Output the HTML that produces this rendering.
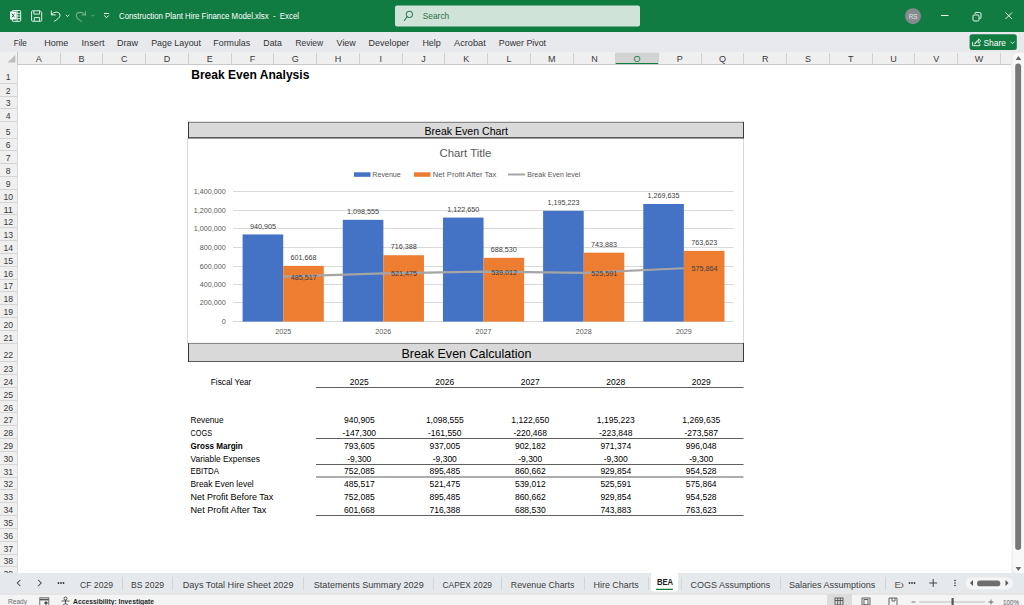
<!DOCTYPE html>
<html><head><meta charset="utf-8"><style>
html,body{margin:0;padding:0;background:#fff;overflow:hidden;}
svg{display:block;font-family:"Liberation Sans", sans-serif;}
</style></head><body>
<svg width="1024" height="605" viewBox="0 0 1024 605">
<rect width="1024" height="605" fill="#fff"/>
<rect x="0" y="0" width="1024" height="32" fill="#107c41" />
<g><rect x="12.3" y="10.5" width="8.4" height="10.8" rx="0.8" fill="none" stroke="#fff" stroke-width="0.9"/><line x1="16.5" y1="13.4" x2="20.7" y2="13.4" stroke="#fff" stroke-width="0.8"/><line x1="16.5" y1="16" x2="20.7" y2="16" stroke="#fff" stroke-width="0.8"/><line x1="16.5" y1="18.6" x2="20.7" y2="18.6" stroke="#fff" stroke-width="0.8"/><line x1="17.1" y1="10.5" x2="17.1" y2="21.3" stroke="#fff" stroke-width="0.8"/><rect x="10" y="11.6" width="6.5" height="7.8" rx="0.6" fill="#fff"/><path d="M11.9 13.6 L14.6 17.4 M14.6 13.6 L11.9 17.4" stroke="#107c41" stroke-width="1"/></g>
<g fill="none" stroke="#fff" stroke-width="0.85"><path d="M32.6 10.8 h7.6 l1.5 1.5 v8 a1 1 0 0 1 -1 1 h-8.1 a1 1 0 0 1 -1 -1 v-8.5 a1 1 0 0 1 1 -1 z"/><path d="M33.9 10.8 v3.3 h5.7 v-3.3"/><path d="M34.3 21.3 v-3.7 h5.3 v3.7"/></g>
<g fill="none" stroke="#fff" stroke-width="0.9" stroke-linecap="round"><path d="M51.3 10.9 v4 h4"/><path d="M51.5 14.7 C53.5 11.3 59.8 11 60 15.2 C60.1 17.5 57 19.5 54.2 21.4"/><path d="M66 15 l1.5 1.5 l1.5 -1.5" stroke-width="0.85"/></g>
<g fill="none" stroke="#6fb18c" stroke-width="1.1" stroke-linecap="round"><path d="M85.5 11.5 v3.5 h-3.5"/><path d="M85.2 14.8 C83 11.5 76.5 11.5 76.3 15.5 C76.2 18 79 19.5 81.5 21.5"/><path d="M91.5 15 l1.3 1.3 l1.3 -1.3" stroke-width="0.8"/></g>
<g fill="none" stroke="#fff" stroke-width="1"><line x1="104" y1="13.5" x2="109" y2="13.5"/><path d="M104.3 15.5 l2.2 2.2 l2.2 -2.2"/></g>
<text x="119" y="18.8" font-size="8.3" fill="#fff" text-anchor="start" textLength="180" lengthAdjust="spacingAndGlyphs" xml:space="preserve">Construction Plant Hire Finance Model.xlsx  -  Excel</text>
<rect x="395" y="5.5" width="245" height="21" rx="2" fill="#cfe4d6"/>
<g fill="none" stroke="#3d7a55" stroke-width="1.05" stroke-linecap="round"><circle cx="409.4" cy="14.3" r="3.1"/><line x1="407.2" y1="16.6" x2="404.3" y2="20.5"/></g>
<text x="422.8" y="18.7" font-size="9.2" fill="#2f6e4a" text-anchor="start" textLength="26.4" lengthAdjust="spacingAndGlyphs" >Search</text>
<circle cx="913" cy="16.2" r="8" fill="#858b8e"/>
<text x="913" y="18.8" font-size="6.3" fill="#e6e6e6" text-anchor="middle" >RS</text>
<line x1="941" y1="15.5" x2="948.5" y2="15.5" stroke="#fff" stroke-width="0.9"/>
<g fill="none" stroke="#fff" stroke-width="0.9"><rect x="973" y="15" width="6" height="6" rx="1.2"/><path d="M975 14 v-0.5 a1 1 0 0 1 1 -1 h3.5 a1.5 1.5 0 0 1 1.5 1.5 v3.5 a1 1 0 0 1 -1 1 h-0.5"/></g>
<path d="M1005.5 12.5 L1012 19 M1012 12.5 L1005.5 19" stroke="#fff" stroke-width="0.9"/>
<rect x="0" y="32" width="1024" height="20" fill="#e7e9ed" />
<text x="13.7" y="45.8" font-size="9.4" fill="#333" text-anchor="start" textLength="13.1" lengthAdjust="spacingAndGlyphs" >File</text>
<text x="44.3" y="45.8" font-size="9.4" fill="#333" text-anchor="start" textLength="24.1" lengthAdjust="spacingAndGlyphs" >Home</text>
<text x="81.5" y="45.8" font-size="9.4" fill="#333" text-anchor="start" textLength="23.0" lengthAdjust="spacingAndGlyphs" >Insert</text>
<text x="117" y="45.8" font-size="9.4" fill="#333" text-anchor="start" textLength="21" lengthAdjust="spacingAndGlyphs" >Draw</text>
<text x="151.2" y="45.8" font-size="9.4" fill="#333" text-anchor="start" textLength="49.8" lengthAdjust="spacingAndGlyphs" >Page Layout</text>
<text x="213.3" y="45.8" font-size="9.4" fill="#333" text-anchor="start" textLength="36.9" lengthAdjust="spacingAndGlyphs" >Formulas</text>
<text x="263.3" y="45.8" font-size="9.4" fill="#333" text-anchor="start" textLength="18.6" lengthAdjust="spacingAndGlyphs" >Data</text>
<text x="295.5" y="45.8" font-size="9.4" fill="#333" text-anchor="start" textLength="27.5" lengthAdjust="spacingAndGlyphs" >Review</text>
<text x="336.6" y="45.8" font-size="9.4" fill="#333" text-anchor="start" textLength="19.2" lengthAdjust="spacingAndGlyphs" >View</text>
<text x="368.6" y="45.8" font-size="9.4" fill="#333" text-anchor="start" textLength="40.7" lengthAdjust="spacingAndGlyphs" >Developer</text>
<text x="422.4" y="45.8" font-size="9.4" fill="#333" text-anchor="start" textLength="18.4" lengthAdjust="spacingAndGlyphs" >Help</text>
<text x="454" y="45.8" font-size="9.4" fill="#333" text-anchor="start" textLength="31.8" lengthAdjust="spacingAndGlyphs" >Acrobat</text>
<text x="498.8" y="45.8" font-size="9.4" fill="#333" text-anchor="start" textLength="47.3" lengthAdjust="spacingAndGlyphs" >Power Pivot</text>
<rect x="969.6" y="34.2" width="47.2" height="15.8" rx="2.5" fill="#107c41"/>
<g fill="none" stroke="#fff" stroke-width="0.85" stroke-linejoin="round"><path d="M972.6 41.8 v3.9 h7.2 v-2"/><path d="M974.8 44.2 c0.4 -2.4 1.8 -3.6 3.8 -3.6 v-1.7 l2.2 2.1 l-2.2 2.1 v-1.3 c-1.6 0 -2.8 0.8 -3.8 2.4z"/></g>
<text x="983.5" y="45.8" font-size="9.6" fill="#fff" text-anchor="start" textLength="22.5" lengthAdjust="spacingAndGlyphs" >Share</text>
<path d="M1010.4 41.6 l2 2 l2 -2" fill="none" stroke="#fff" stroke-width="0.8"/>
<rect x="0" y="52" width="1024" height="13" fill="#efefef" />
<path d="M7.5 62.6 L15.3 62.6 L15.3 55 Z" fill="#bdbdbd"/>
<line x1="60.50" y1="53" x2="60.50" y2="64" stroke="#d0d0d0" stroke-width="1"/>
<text x="38.77" y="61.9" font-size="9.0" fill="#3a3a3a" text-anchor="middle" >A</text>
<line x1="102.50" y1="53" x2="102.50" y2="64" stroke="#d0d0d0" stroke-width="1"/>
<text x="81.51" y="61.9" font-size="9.0" fill="#3a3a3a" text-anchor="middle" >B</text>
<line x1="145.50" y1="53" x2="145.50" y2="64" stroke="#d0d0d0" stroke-width="1"/>
<text x="124.25" y="61.9" font-size="9.0" fill="#3a3a3a" text-anchor="middle" >C</text>
<line x1="188.50" y1="53" x2="188.50" y2="64" stroke="#d0d0d0" stroke-width="1"/>
<text x="166.99" y="61.9" font-size="9.0" fill="#3a3a3a" text-anchor="middle" >D</text>
<line x1="231.50" y1="53" x2="231.50" y2="64" stroke="#d0d0d0" stroke-width="1"/>
<text x="209.73" y="61.9" font-size="9.0" fill="#3a3a3a" text-anchor="middle" >E</text>
<line x1="273.50" y1="53" x2="273.50" y2="64" stroke="#d0d0d0" stroke-width="1"/>
<text x="252.47" y="61.9" font-size="9.0" fill="#3a3a3a" text-anchor="middle" >F</text>
<line x1="316.50" y1="53" x2="316.50" y2="64" stroke="#d0d0d0" stroke-width="1"/>
<text x="295.21" y="61.9" font-size="9.0" fill="#3a3a3a" text-anchor="middle" >G</text>
<line x1="359.50" y1="53" x2="359.50" y2="64" stroke="#d0d0d0" stroke-width="1"/>
<text x="337.95" y="61.9" font-size="9.0" fill="#3a3a3a" text-anchor="middle" >H</text>
<line x1="402.50" y1="53" x2="402.50" y2="64" stroke="#d0d0d0" stroke-width="1"/>
<text x="380.69" y="61.9" font-size="9.0" fill="#3a3a3a" text-anchor="middle" >I</text>
<line x1="444.50" y1="53" x2="444.50" y2="64" stroke="#d0d0d0" stroke-width="1"/>
<text x="423.43" y="61.9" font-size="9.0" fill="#3a3a3a" text-anchor="middle" >J</text>
<line x1="487.50" y1="53" x2="487.50" y2="64" stroke="#d0d0d0" stroke-width="1"/>
<text x="466.17" y="61.9" font-size="9.0" fill="#3a3a3a" text-anchor="middle" >K</text>
<line x1="530.50" y1="53" x2="530.50" y2="64" stroke="#d0d0d0" stroke-width="1"/>
<text x="508.91" y="61.9" font-size="9.0" fill="#3a3a3a" text-anchor="middle" >L</text>
<line x1="573.50" y1="53" x2="573.50" y2="64" stroke="#d0d0d0" stroke-width="1"/>
<text x="551.65" y="61.9" font-size="9.0" fill="#3a3a3a" text-anchor="middle" >M</text>
<line x1="615.50" y1="53" x2="615.50" y2="64" stroke="#d0d0d0" stroke-width="1"/>
<text x="594.39" y="61.9" font-size="9.0" fill="#3a3a3a" text-anchor="middle" >N</text>
<rect x="615.76" y="52.5" width="42.74" height="12" fill="#d3d3d3" />
<rect x="615.76" y="63" width="42.74" height="1.8" fill="#107c41" />
<line x1="658.50" y1="53" x2="658.50" y2="64" stroke="#d0d0d0" stroke-width="1"/>
<text x="637.13" y="61.9" font-size="9.0" fill="#107c41" text-anchor="middle" >O</text>
<line x1="701.50" y1="53" x2="701.50" y2="64" stroke="#d0d0d0" stroke-width="1"/>
<text x="679.87" y="61.9" font-size="9.0" fill="#3a3a3a" text-anchor="middle" >P</text>
<line x1="743.50" y1="53" x2="743.50" y2="64" stroke="#d0d0d0" stroke-width="1"/>
<text x="722.61" y="61.9" font-size="9.0" fill="#3a3a3a" text-anchor="middle" >Q</text>
<line x1="786.50" y1="53" x2="786.50" y2="64" stroke="#d0d0d0" stroke-width="1"/>
<text x="765.35" y="61.9" font-size="9.0" fill="#3a3a3a" text-anchor="middle" >R</text>
<line x1="829.50" y1="53" x2="829.50" y2="64" stroke="#d0d0d0" stroke-width="1"/>
<text x="808.09" y="61.9" font-size="9.0" fill="#3a3a3a" text-anchor="middle" >S</text>
<line x1="872.50" y1="53" x2="872.50" y2="64" stroke="#d0d0d0" stroke-width="1"/>
<text x="850.83" y="61.9" font-size="9.0" fill="#3a3a3a" text-anchor="middle" >T</text>
<line x1="914.50" y1="53" x2="914.50" y2="64" stroke="#d0d0d0" stroke-width="1"/>
<text x="893.57" y="61.9" font-size="9.0" fill="#3a3a3a" text-anchor="middle" >U</text>
<line x1="957.50" y1="53" x2="957.50" y2="64" stroke="#d0d0d0" stroke-width="1"/>
<text x="936.31" y="61.9" font-size="9.0" fill="#3a3a3a" text-anchor="middle" >V</text>
<line x1="1000.50" y1="53" x2="1000.50" y2="64" stroke="#d0d0d0" stroke-width="1"/>
<text x="979.05" y="61.9" font-size="9.0" fill="#3a3a3a" text-anchor="middle" >W</text>
<line x1="17" y1="64.5" x2="1011" y2="64.5" stroke="#c8c8c8" stroke-width="1"/>
<line x1="17.5" y1="52" x2="17.5" y2="573" stroke="#c8c8c8" stroke-width="1"/>
<rect x="0" y="65" width="17.5" height="508" fill="#efefef" />
<line x1="0" y1="83.50" x2="17" y2="83.50" stroke="#d4d4d4" stroke-width="1"/>
<text x="8.2" y="80.1" font-size="9.7" fill="#3a3a3a" text-anchor="middle" textLength="4.8" lengthAdjust="spacingAndGlyphs" >1</text>
<line x1="0" y1="96.50" x2="17" y2="96.50" stroke="#d4d4d4" stroke-width="1"/>
<text x="8.2" y="93.65" font-size="9.7" fill="#3a3a3a" text-anchor="middle" textLength="4.8" lengthAdjust="spacingAndGlyphs" >2</text>
<line x1="0" y1="108.50" x2="17" y2="108.50" stroke="#d4d4d4" stroke-width="1"/>
<text x="8.2" y="106.45" font-size="9.7" fill="#3a3a3a" text-anchor="middle" textLength="4.8" lengthAdjust="spacingAndGlyphs" >3</text>
<line x1="0" y1="121.50" x2="17" y2="121.50" stroke="#d4d4d4" stroke-width="1"/>
<text x="8.2" y="119.25" font-size="9.7" fill="#3a3a3a" text-anchor="middle" textLength="4.8" lengthAdjust="spacingAndGlyphs" >4</text>
<line x1="0" y1="138.50" x2="17" y2="138.50" stroke="#d4d4d4" stroke-width="1"/>
<text x="8.2" y="134.8" font-size="9.7" fill="#3a3a3a" text-anchor="middle" textLength="4.8" lengthAdjust="spacingAndGlyphs" >5</text>
<line x1="0" y1="150.50" x2="17" y2="150.50" stroke="#d4d4d4" stroke-width="1"/>
<text x="8.2" y="148.38" font-size="9.7" fill="#3a3a3a" text-anchor="middle" textLength="4.8" lengthAdjust="spacingAndGlyphs" >6</text>
<line x1="0" y1="163.50" x2="17" y2="163.50" stroke="#d4d4d4" stroke-width="1"/>
<text x="8.2" y="161.2" font-size="9.7" fill="#3a3a3a" text-anchor="middle" textLength="4.8" lengthAdjust="spacingAndGlyphs" >7</text>
<line x1="0" y1="176.50" x2="17" y2="176.50" stroke="#d4d4d4" stroke-width="1"/>
<text x="8.2" y="174.02" font-size="9.7" fill="#3a3a3a" text-anchor="middle" textLength="4.8" lengthAdjust="spacingAndGlyphs" >8</text>
<line x1="0" y1="189.50" x2="17" y2="189.50" stroke="#d4d4d4" stroke-width="1"/>
<text x="8.2" y="186.85" font-size="9.7" fill="#3a3a3a" text-anchor="middle" textLength="4.8" lengthAdjust="spacingAndGlyphs" >9</text>
<line x1="0" y1="202.50" x2="17" y2="202.50" stroke="#d4d4d4" stroke-width="1"/>
<text x="8.2" y="199.67" font-size="9.7" fill="#3a3a3a" text-anchor="middle" textLength="9.6" lengthAdjust="spacingAndGlyphs" >10</text>
<line x1="0" y1="214.50" x2="17" y2="214.50" stroke="#d4d4d4" stroke-width="1"/>
<text x="8.2" y="212.5" font-size="9.7" fill="#3a3a3a" text-anchor="middle" textLength="9.6" lengthAdjust="spacingAndGlyphs" >11</text>
<line x1="0" y1="227.50" x2="17" y2="227.50" stroke="#d4d4d4" stroke-width="1"/>
<text x="8.2" y="225.32" font-size="9.7" fill="#3a3a3a" text-anchor="middle" textLength="9.6" lengthAdjust="spacingAndGlyphs" >12</text>
<line x1="0" y1="240.50" x2="17" y2="240.50" stroke="#d4d4d4" stroke-width="1"/>
<text x="8.2" y="238.15" font-size="9.7" fill="#3a3a3a" text-anchor="middle" textLength="9.6" lengthAdjust="spacingAndGlyphs" >13</text>
<line x1="0" y1="253.50" x2="17" y2="253.50" stroke="#d4d4d4" stroke-width="1"/>
<text x="8.2" y="250.97" font-size="9.7" fill="#3a3a3a" text-anchor="middle" textLength="9.6" lengthAdjust="spacingAndGlyphs" >14</text>
<line x1="0" y1="266.50" x2="17" y2="266.50" stroke="#d4d4d4" stroke-width="1"/>
<text x="8.2" y="263.8" font-size="9.7" fill="#3a3a3a" text-anchor="middle" textLength="9.6" lengthAdjust="spacingAndGlyphs" >15</text>
<line x1="0" y1="279.50" x2="17" y2="279.50" stroke="#d4d4d4" stroke-width="1"/>
<text x="8.2" y="276.62" font-size="9.7" fill="#3a3a3a" text-anchor="middle" textLength="9.6" lengthAdjust="spacingAndGlyphs" >16</text>
<line x1="0" y1="291.50" x2="17" y2="291.50" stroke="#d4d4d4" stroke-width="1"/>
<text x="8.2" y="289.45" font-size="9.7" fill="#3a3a3a" text-anchor="middle" textLength="9.6" lengthAdjust="spacingAndGlyphs" >17</text>
<line x1="0" y1="304.50" x2="17" y2="304.50" stroke="#d4d4d4" stroke-width="1"/>
<text x="8.2" y="302.27" font-size="9.7" fill="#3a3a3a" text-anchor="middle" textLength="9.6" lengthAdjust="spacingAndGlyphs" >18</text>
<line x1="0" y1="317.50" x2="17" y2="317.50" stroke="#d4d4d4" stroke-width="1"/>
<text x="8.2" y="315.1" font-size="9.7" fill="#3a3a3a" text-anchor="middle" textLength="9.6" lengthAdjust="spacingAndGlyphs" >19</text>
<line x1="0" y1="330.50" x2="17" y2="330.50" stroke="#d4d4d4" stroke-width="1"/>
<text x="8.2" y="327.92" font-size="9.7" fill="#3a3a3a" text-anchor="middle" textLength="9.6" lengthAdjust="spacingAndGlyphs" >20</text>
<line x1="0" y1="343.50" x2="17" y2="343.50" stroke="#d4d4d4" stroke-width="1"/>
<text x="8.2" y="340.75" font-size="9.7" fill="#3a3a3a" text-anchor="middle" textLength="9.6" lengthAdjust="spacingAndGlyphs" >21</text>
<line x1="0" y1="361.50" x2="17" y2="361.50" stroke="#d4d4d4" stroke-width="1"/>
<text x="8.2" y="358.44" font-size="9.7" fill="#3a3a3a" text-anchor="middle" textLength="9.6" lengthAdjust="spacingAndGlyphs" >22</text>
<line x1="0" y1="374.50" x2="17" y2="374.50" stroke="#d4d4d4" stroke-width="1"/>
<text x="8.2" y="372.02" font-size="9.7" fill="#3a3a3a" text-anchor="middle" textLength="9.6" lengthAdjust="spacingAndGlyphs" >23</text>
<line x1="0" y1="387.50" x2="17" y2="387.50" stroke="#d4d4d4" stroke-width="1"/>
<text x="8.2" y="384.85" font-size="9.7" fill="#3a3a3a" text-anchor="middle" textLength="9.6" lengthAdjust="spacingAndGlyphs" >24</text>
<line x1="0" y1="400.50" x2="17" y2="400.50" stroke="#d4d4d4" stroke-width="1"/>
<text x="8.2" y="397.68" font-size="9.7" fill="#3a3a3a" text-anchor="middle" textLength="9.6" lengthAdjust="spacingAndGlyphs" >25</text>
<line x1="0" y1="412.50" x2="17" y2="412.50" stroke="#d4d4d4" stroke-width="1"/>
<text x="8.2" y="410.51" font-size="9.7" fill="#3a3a3a" text-anchor="middle" textLength="9.6" lengthAdjust="spacingAndGlyphs" >26</text>
<line x1="0" y1="425.50" x2="17" y2="425.50" stroke="#d4d4d4" stroke-width="1"/>
<text x="8.2" y="423.34" font-size="9.7" fill="#3a3a3a" text-anchor="middle" textLength="9.6" lengthAdjust="spacingAndGlyphs" >27</text>
<line x1="0" y1="438.50" x2="17" y2="438.50" stroke="#d4d4d4" stroke-width="1"/>
<text x="8.2" y="436.17" font-size="9.7" fill="#3a3a3a" text-anchor="middle" textLength="9.6" lengthAdjust="spacingAndGlyphs" >28</text>
<line x1="0" y1="451.50" x2="17" y2="451.50" stroke="#d4d4d4" stroke-width="1"/>
<text x="8.2" y="449.0" font-size="9.7" fill="#3a3a3a" text-anchor="middle" textLength="9.6" lengthAdjust="spacingAndGlyphs" >29</text>
<line x1="0" y1="464.50" x2="17" y2="464.50" stroke="#d4d4d4" stroke-width="1"/>
<text x="8.2" y="461.83" font-size="9.7" fill="#3a3a3a" text-anchor="middle" textLength="9.6" lengthAdjust="spacingAndGlyphs" >30</text>
<line x1="0" y1="477.50" x2="17" y2="477.50" stroke="#d4d4d4" stroke-width="1"/>
<text x="8.2" y="474.66" font-size="9.7" fill="#3a3a3a" text-anchor="middle" textLength="9.6" lengthAdjust="spacingAndGlyphs" >31</text>
<line x1="0" y1="489.50" x2="17" y2="489.50" stroke="#d4d4d4" stroke-width="1"/>
<text x="8.2" y="487.49" font-size="9.7" fill="#3a3a3a" text-anchor="middle" textLength="9.6" lengthAdjust="spacingAndGlyphs" >32</text>
<line x1="0" y1="502.50" x2="17" y2="502.50" stroke="#d4d4d4" stroke-width="1"/>
<text x="8.2" y="500.32" font-size="9.7" fill="#3a3a3a" text-anchor="middle" textLength="9.6" lengthAdjust="spacingAndGlyphs" >33</text>
<line x1="0" y1="515.50" x2="17" y2="515.50" stroke="#d4d4d4" stroke-width="1"/>
<text x="8.2" y="513.15" font-size="9.7" fill="#3a3a3a" text-anchor="middle" textLength="9.6" lengthAdjust="spacingAndGlyphs" >34</text>
<line x1="0" y1="528.50" x2="17" y2="528.50" stroke="#d4d4d4" stroke-width="1"/>
<text x="8.2" y="525.98" font-size="9.7" fill="#3a3a3a" text-anchor="middle" textLength="9.6" lengthAdjust="spacingAndGlyphs" >35</text>
<line x1="0" y1="541.50" x2="17" y2="541.50" stroke="#d4d4d4" stroke-width="1"/>
<text x="8.2" y="538.81" font-size="9.7" fill="#3a3a3a" text-anchor="middle" textLength="9.6" lengthAdjust="spacingAndGlyphs" >36</text>
<line x1="0" y1="554.50" x2="17" y2="554.50" stroke="#d4d4d4" stroke-width="1"/>
<text x="8.2" y="551.64" font-size="9.7" fill="#3a3a3a" text-anchor="middle" textLength="9.6" lengthAdjust="spacingAndGlyphs" >37</text>
<line x1="0" y1="566.50" x2="17" y2="566.50" stroke="#d4d4d4" stroke-width="1"/>
<text x="8.2" y="564.47" font-size="9.7" fill="#3a3a3a" text-anchor="middle" textLength="9.6" lengthAdjust="spacingAndGlyphs" >38</text>
<text x="8.2" y="577.3" font-size="9.7" fill="#3a3a3a" text-anchor="middle" textLength="9.6" lengthAdjust="spacingAndGlyphs" >39</text>
<text x="191.2" y="79.0" font-size="12" fill="#000" text-anchor="start" font-weight="bold" textLength="118.2" lengthAdjust="spacingAndGlyphs" >Break Even Analysis</text>
<rect x="187.5" y="138.5" width="556" height="204.70" fill="#fff" stroke="#d9d9d9" stroke-width="1"/>
<rect x="188.5" y="122.4" width="555" height="15.4" fill="#d9d9d9" />
<line x1="188" y1="122.4" x2="744" y2="122.4" stroke="#8a8a8a" stroke-width="1.4"/>
<line x1="188" y1="137.8" x2="744" y2="137.8" stroke="#5c5c5c" stroke-width="1.4"/>
<line x1="188.5" y1="121.9" x2="188.5" y2="138.3" stroke="#3a3a3a" stroke-width="1"/>
<line x1="743.5" y1="121.9" x2="743.5" y2="138.3" stroke="#3a3a3a" stroke-width="1"/>
<text x="466.2" y="134.6" font-size="11.2" fill="#000" text-anchor="middle" textLength="83.5" lengthAdjust="spacingAndGlyphs" >Break Even Chart</text>
<text x="465.4" y="156.7" font-size="10.5" fill="#595959" text-anchor="middle" textLength="52" lengthAdjust="spacingAndGlyphs" >Chart Title</text>
<rect x="354" y="172.3" width="16.5" height="4.5" fill="#4472c4" />
<text x="372.3" y="176.8" font-size="6.6" fill="#595959" text-anchor="start" textLength="28.5" lengthAdjust="spacingAndGlyphs" >Revenue</text>
<rect x="414" y="172.3" width="16.5" height="4.5" fill="#ed7d31" />
<text x="432.8" y="176.8" font-size="6.6" fill="#595959" text-anchor="start" textLength="63.5" lengthAdjust="spacingAndGlyphs" >Net Profit After Tax</text>
<line x1="508" y1="174.5" x2="525" y2="174.5" stroke="#a5a5a5" stroke-width="2"/>
<text x="527.3" y="176.8" font-size="6.6" fill="#595959" text-anchor="start" textLength="53" lengthAdjust="spacingAndGlyphs" >Break Even level</text>
<line x1="233" y1="321.5" x2="733.6" y2="321.5" stroke="#d9d9d9" stroke-width="1"/>
<text x="225.7" y="323.9" font-size="7.2" fill="#595959" text-anchor="end" >0</text>
<line x1="233" y1="302.5" x2="733.6" y2="302.5" stroke="#d9d9d9" stroke-width="1"/>
<text x="225.7" y="304.9" font-size="7.2" fill="#595959" text-anchor="end" >200,000</text>
<line x1="233" y1="284.5" x2="733.6" y2="284.5" stroke="#d9d9d9" stroke-width="1"/>
<text x="225.7" y="286.9" font-size="7.2" fill="#595959" text-anchor="end" >400,000</text>
<line x1="233" y1="266.5" x2="733.6" y2="266.5" stroke="#d9d9d9" stroke-width="1"/>
<text x="225.7" y="268.9" font-size="7.2" fill="#595959" text-anchor="end" >600,000</text>
<line x1="233" y1="247.5" x2="733.6" y2="247.5" stroke="#d9d9d9" stroke-width="1"/>
<text x="225.7" y="249.9" font-size="7.2" fill="#595959" text-anchor="end" >800,000</text>
<line x1="233" y1="228.5" x2="733.6" y2="228.5" stroke="#d9d9d9" stroke-width="1"/>
<text x="225.7" y="230.9" font-size="7.2" fill="#595959" text-anchor="end" >1,000,000</text>
<line x1="233" y1="210.5" x2="733.6" y2="210.5" stroke="#d9d9d9" stroke-width="1"/>
<text x="225.7" y="212.9" font-size="7.2" fill="#595959" text-anchor="end" >1,200,000</text>
<line x1="233" y1="191.5" x2="733.6" y2="191.5" stroke="#d9d9d9" stroke-width="1"/>
<text x="225.7" y="193.9" font-size="7.2" fill="#595959" text-anchor="end" >1,400,000</text>
<rect x="242.6" y="234.43" width="40.6" height="87.17" fill="#4472c4" />
<rect x="283.2" y="265.86" width="40.6" height="55.74" fill="#ed7d31" />
<text x="262.9" y="228.73" font-size="7.2" fill="#404040" text-anchor="middle" >940,905</text>
<text x="303.5" y="260.06" font-size="7.2" fill="#404040" text-anchor="middle" >601,668</text>
<text x="283.2" y="334.2" font-size="7.2" fill="#595959" text-anchor="middle" >2025</text>
<rect x="342.77" y="219.83" width="40.6" height="101.77" fill="#4472c4" />
<rect x="383.37" y="255.23" width="40.6" height="66.37" fill="#ed7d31" />
<text x="363.07" y="214.13" font-size="7.2" fill="#404040" text-anchor="middle" >1,098,555</text>
<text x="403.67" y="249.43" font-size="7.2" fill="#404040" text-anchor="middle" >716,388</text>
<text x="383.37" y="334.2" font-size="7.2" fill="#595959" text-anchor="middle" >2026</text>
<rect x="442.94" y="217.59" width="40.6" height="104.01" fill="#4472c4" />
<rect x="483.54" y="257.81" width="40.6" height="63.79" fill="#ed7d31" />
<text x="463.24" y="211.89" font-size="7.2" fill="#404040" text-anchor="middle" >1,122,650</text>
<text x="503.84" y="252.01" font-size="7.2" fill="#404040" text-anchor="middle" >688,530</text>
<text x="483.54" y="334.2" font-size="7.2" fill="#595959" text-anchor="middle" >2027</text>
<rect x="543.11" y="210.87" width="40.6" height="110.73" fill="#4472c4" />
<rect x="583.71" y="252.68" width="40.6" height="68.92" fill="#ed7d31" />
<text x="563.41" y="205.17" font-size="7.2" fill="#404040" text-anchor="middle" >1,195,223</text>
<text x="604.01" y="246.88" font-size="7.2" fill="#404040" text-anchor="middle" >743,883</text>
<text x="583.71" y="334.2" font-size="7.2" fill="#595959" text-anchor="middle" >2028</text>
<rect x="643.28" y="203.98" width="40.6" height="117.62" fill="#4472c4" />
<rect x="683.88" y="250.86" width="40.6" height="70.74" fill="#ed7d31" />
<text x="663.58" y="198.28" font-size="7.2" fill="#404040" text-anchor="middle" >1,269,635</text>
<text x="704.18" y="245.06" font-size="7.2" fill="#404040" text-anchor="middle" >763,623</text>
<text x="683.88" y="334.2" font-size="7.2" fill="#595959" text-anchor="middle" >2029</text>
<polyline points="283.20,276.62 383.37,273.29 483.54,271.66 583.71,272.91 683.88,268.25" fill="none" stroke="#a5a5a5" stroke-width="2.2" stroke-linejoin="round"/>
<text x="290.8" y="279.82" font-size="7.2" fill="#404040" text-anchor="start" >485,517</text>
<text x="390.97" y="276.49" font-size="7.2" fill="#404040" text-anchor="start" >521,475</text>
<text x="491.14" y="274.86" font-size="7.2" fill="#404040" text-anchor="start" >539,012</text>
<text x="591.31" y="276.11" font-size="7.2" fill="#404040" text-anchor="start" >525,591</text>
<text x="691.48" y="271.45" font-size="7.2" fill="#404040" text-anchor="start" >575,864</text>
<rect x="188.5" y="343.5" width="555" height="18.0" fill="#d9d9d9" />
<line x1="188" y1="343.5" x2="744" y2="343.5" stroke="#8a8a8a" stroke-width="1"/>
<line x1="188" y1="361.5" x2="744" y2="361.5" stroke="#5c5c5c" stroke-width="1"/>
<line x1="188.5" y1="343.0" x2="188.5" y2="362.0" stroke="#3a3a3a" stroke-width="1"/>
<line x1="743.5" y1="343.0" x2="743.5" y2="362.0" stroke="#3a3a3a" stroke-width="1"/>
<text x="466.4" y="357.9" font-size="12.7" fill="#000" text-anchor="middle" textLength="130" lengthAdjust="spacingAndGlyphs" >Break Even Calculation</text>
<text x="210.8" y="384.5" font-size="8.5" fill="#000" text-anchor="start" textLength="40.6" lengthAdjust="spacingAndGlyphs" >Fiscal Year</text>
<text x="359.32" y="384.5" font-size="8.5" fill="#000" text-anchor="middle" >2025</text>
<text x="444.8" y="384.5" font-size="8.5" fill="#000" text-anchor="middle" >2026</text>
<text x="530.28" y="384.5" font-size="8.5" fill="#000" text-anchor="middle" >2027</text>
<text x="615.76" y="384.5" font-size="8.5" fill="#000" text-anchor="middle" >2028</text>
<text x="701.24" y="384.5" font-size="8.5" fill="#000" text-anchor="middle" >2029</text>
<line x1="316" y1="387.50" x2="743.5" y2="387.50" stroke="#5f5f5f" stroke-width="1"/>
<text x="190.5" y="423.14" font-size="8.3" fill="#000" text-anchor="start" textLength="33" lengthAdjust="spacingAndGlyphs" >Revenue</text>
<text x="359.32" y="423.14" font-size="8.5" fill="#000" text-anchor="middle" >940,905</text>
<text x="444.8" y="423.14" font-size="8.5" fill="#000" text-anchor="middle" >1,098,555</text>
<text x="530.28" y="423.14" font-size="8.5" fill="#000" text-anchor="middle" >1,122,650</text>
<text x="615.76" y="423.14" font-size="8.5" fill="#000" text-anchor="middle" >1,195,223</text>
<text x="701.24" y="423.14" font-size="8.5" fill="#000" text-anchor="middle" >1,269,635</text>
<text x="190.5" y="435.97" font-size="8.3" fill="#000" text-anchor="start" textLength="21.5" lengthAdjust="spacingAndGlyphs" >COGS</text>
<text x="359.32" y="435.97" font-size="8.5" fill="#000" text-anchor="middle" >-147,300</text>
<text x="444.8" y="435.97" font-size="8.5" fill="#000" text-anchor="middle" >-161,550</text>
<text x="530.28" y="435.97" font-size="8.5" fill="#000" text-anchor="middle" >-220,468</text>
<text x="615.76" y="435.97" font-size="8.5" fill="#000" text-anchor="middle" >-223,848</text>
<text x="701.24" y="435.97" font-size="8.5" fill="#000" text-anchor="middle" >-273,587</text>
<text x="190.5" y="448.8" font-size="8.3" fill="#000" text-anchor="start" font-weight="bold" textLength="52.3" lengthAdjust="spacingAndGlyphs" >Gross Margin</text>
<text x="359.32" y="448.8" font-size="8.5" fill="#000" text-anchor="middle" >793,605</text>
<text x="444.8" y="448.8" font-size="8.5" fill="#000" text-anchor="middle" >937,005</text>
<text x="530.28" y="448.8" font-size="8.5" fill="#000" text-anchor="middle" >902,182</text>
<text x="615.76" y="448.8" font-size="8.5" fill="#000" text-anchor="middle" >971,374</text>
<text x="701.24" y="448.8" font-size="8.5" fill="#000" text-anchor="middle" >996,048</text>
<text x="190.5" y="461.63" font-size="8.3" fill="#000" text-anchor="start" textLength="69.4" lengthAdjust="spacingAndGlyphs" >Variable Expenses</text>
<text x="359.32" y="461.63" font-size="8.5" fill="#000" text-anchor="middle" >-9,300</text>
<text x="444.8" y="461.63" font-size="8.5" fill="#000" text-anchor="middle" >-9,300</text>
<text x="530.28" y="461.63" font-size="8.5" fill="#000" text-anchor="middle" >-9,300</text>
<text x="615.76" y="461.63" font-size="8.5" fill="#000" text-anchor="middle" >-9,300</text>
<text x="701.24" y="461.63" font-size="8.5" fill="#000" text-anchor="middle" >-9,300</text>
<text x="190.5" y="474.46" font-size="8.3" fill="#000" text-anchor="start" textLength="28.5" lengthAdjust="spacingAndGlyphs" >EBITDA</text>
<text x="359.32" y="474.46" font-size="8.5" fill="#000" text-anchor="middle" >752,085</text>
<text x="444.8" y="474.46" font-size="8.5" fill="#000" text-anchor="middle" >895,485</text>
<text x="530.28" y="474.46" font-size="8.5" fill="#000" text-anchor="middle" >860,662</text>
<text x="615.76" y="474.46" font-size="8.5" fill="#000" text-anchor="middle" >929,854</text>
<text x="701.24" y="474.46" font-size="8.5" fill="#000" text-anchor="middle" >954,528</text>
<text x="190.5" y="487.29" font-size="8.3" fill="#000" text-anchor="start" textLength="63.2" lengthAdjust="spacingAndGlyphs" >Break Even level</text>
<text x="359.32" y="487.29" font-size="8.5" fill="#000" text-anchor="middle" >485,517</text>
<text x="444.8" y="487.29" font-size="8.5" fill="#000" text-anchor="middle" >521,475</text>
<text x="530.28" y="487.29" font-size="8.5" fill="#000" text-anchor="middle" >539,012</text>
<text x="615.76" y="487.29" font-size="8.5" fill="#000" text-anchor="middle" >525,591</text>
<text x="701.24" y="487.29" font-size="8.5" fill="#000" text-anchor="middle" >575,864</text>
<text x="190.5" y="500.12" font-size="8.3" fill="#000" text-anchor="start" textLength="82.8" lengthAdjust="spacingAndGlyphs" >Net Profit Before Tax</text>
<text x="359.32" y="500.12" font-size="8.5" fill="#000" text-anchor="middle" >752,085</text>
<text x="444.8" y="500.12" font-size="8.5" fill="#000" text-anchor="middle" >895,485</text>
<text x="530.28" y="500.12" font-size="8.5" fill="#000" text-anchor="middle" >860,662</text>
<text x="615.76" y="500.12" font-size="8.5" fill="#000" text-anchor="middle" >929,854</text>
<text x="701.24" y="500.12" font-size="8.5" fill="#000" text-anchor="middle" >954,528</text>
<text x="190.5" y="512.95" font-size="8.3" fill="#000" text-anchor="start" textLength="75.9" lengthAdjust="spacingAndGlyphs" >Net Profit After Tax</text>
<text x="359.32" y="512.95" font-size="8.5" fill="#000" text-anchor="middle" >601,668</text>
<text x="444.8" y="512.95" font-size="8.5" fill="#000" text-anchor="middle" >716,388</text>
<text x="530.28" y="512.95" font-size="8.5" fill="#000" text-anchor="middle" >688,530</text>
<text x="615.76" y="512.95" font-size="8.5" fill="#000" text-anchor="middle" >743,883</text>
<text x="701.24" y="512.95" font-size="8.5" fill="#000" text-anchor="middle" >763,623</text>
<line x1="316" y1="438.50" x2="743.5" y2="438.50" stroke="#5f5f5f" stroke-width="1"/>
<line x1="316" y1="464.50" x2="743.5" y2="464.50" stroke="#5f5f5f" stroke-width="1"/>
<line x1="316" y1="477" x2="743.5" y2="477" stroke="#adadad" stroke-width="2"/>
<line x1="316" y1="515.50" x2="743.5" y2="515.50" stroke="#5f5f5f" stroke-width="1"/>
<rect x="1011.5" y="52" width="12.5" height="521" fill="#eeeeee" />
<rect x="1013" y="53" width="14" height="520.5" rx="5" fill="#f8f8f8"/>
<path d="M1015.6 60 L1018.4 55.9 L1021.2 60 Z" fill="#666"/>
<rect x="1015.2" y="63.5" width="5.9" height="486.5" rx="2.9" fill="#777"/>
<path d="M1015.6 567 L1018.4 571 L1021.2 567 Z" fill="#666"/>
<rect x="0" y="573" width="1024" height="21" fill="#e6e9ec" />
<path d="M20.3 580 l-3 3 l3 3" fill="none" stroke="#444" stroke-width="1.05"/>
<path d="M38.2 580 l3 3 l-3 3" fill="none" stroke="#444" stroke-width="1.05"/>
<circle cx="58.5" cy="583" r="0.9" fill="#333"/>
<circle cx="61" cy="583" r="0.9" fill="#333"/>
<circle cx="63.5" cy="583" r="0.9" fill="#333"/>
<text x="80" y="587.6" font-size="9.5" fill="#3d3d3d" text-anchor="start" textLength="33" lengthAdjust="spacingAndGlyphs" >CF 2029</text>
<text x="131" y="587.6" font-size="9.5" fill="#3d3d3d" text-anchor="start" textLength="33" lengthAdjust="spacingAndGlyphs" >BS 2029</text>
<text x="182.7" y="587.6" font-size="9.5" fill="#3d3d3d" text-anchor="start" textLength="110.8" lengthAdjust="spacingAndGlyphs" >Days Total Hire Sheet 2029</text>
<text x="313.8" y="587.6" font-size="9.5" fill="#3d3d3d" text-anchor="start" textLength="109.9" lengthAdjust="spacingAndGlyphs" >Statements Summary 2029</text>
<text x="442.5" y="587.6" font-size="9.5" fill="#3d3d3d" text-anchor="start" textLength="49.5" lengthAdjust="spacingAndGlyphs" >CAPEX 2029</text>
<text x="510.8" y="587.6" font-size="9.5" fill="#3d3d3d" text-anchor="start" textLength="63.6" lengthAdjust="spacingAndGlyphs" >Revenue Charts</text>
<text x="593.5" y="587.6" font-size="9.5" fill="#3d3d3d" text-anchor="start" textLength="45.1" lengthAdjust="spacingAndGlyphs" >Hire Charts</text>
<text x="690.6" y="587.6" font-size="9.5" fill="#3d3d3d" text-anchor="start" textLength="79.7" lengthAdjust="spacingAndGlyphs" >COGS Assumptions</text>
<text x="788.9" y="587.6" font-size="9.5" fill="#3d3d3d" text-anchor="start" textLength="86.3" lengthAdjust="spacingAndGlyphs" >Salaries Assumptions</text>
<line x1="122.5" y1="577" x2="122.5" y2="590" stroke="#d2d4d7" stroke-width="1"/>
<line x1="172.5" y1="577" x2="172.5" y2="590" stroke="#d2d4d7" stroke-width="1"/>
<line x1="303.5" y1="577" x2="303.5" y2="590" stroke="#d2d4d7" stroke-width="1"/>
<line x1="433.5" y1="577" x2="433.5" y2="590" stroke="#d2d4d7" stroke-width="1"/>
<line x1="501.5" y1="577" x2="501.5" y2="590" stroke="#d2d4d7" stroke-width="1"/>
<line x1="584.5" y1="577" x2="584.5" y2="590" stroke="#d2d4d7" stroke-width="1"/>
<line x1="648.5" y1="577" x2="648.5" y2="590" stroke="#d2d4d7" stroke-width="1"/>
<line x1="681.5" y1="577" x2="681.5" y2="590" stroke="#d2d4d7" stroke-width="1"/>
<line x1="780.5" y1="577" x2="780.5" y2="590" stroke="#d2d4d7" stroke-width="1"/>
<line x1="885.5" y1="577" x2="885.5" y2="590" stroke="#d2d4d7" stroke-width="1"/>
<rect x="651" y="572.5" width="27" height="19" rx="3" fill="#fff"/>
<text x="656.9" y="585" font-size="9.6" fill="#1a1a1a" text-anchor="start" font-weight="bold" textLength="16.2" lengthAdjust="spacingAndGlyphs" >BEA</text>
<rect x="656" y="588.8" width="17" height="1.3" rx="0.6" fill="#107c41"/>
<clipPath id="ce"><rect x="890" y="575" width="13.5" height="16"/></clipPath>
<g clip-path="url(#ce)">
<text x="894.5" y="587.6" font-size="9.5" fill="#555" text-anchor="start" >Ex</text>
</g>
<circle cx="909.5" cy="583" r="0.9" fill="#333"/>
<circle cx="912" cy="583" r="0.9" fill="#333"/>
<circle cx="914.5" cy="583" r="0.9" fill="#333"/>
<path d="M933.2 579 v8 M929.2 583 h8" stroke="#333" stroke-width="0.9"/>
<circle cx="955" cy="580.5" r="0.8" fill="#333"/>
<circle cx="955" cy="583" r="0.8" fill="#333"/>
<circle cx="955" cy="585.5" r="0.8" fill="#333"/>
<rect x="965.8" y="577.6" width="47.2" height="11.6" rx="5.8" fill="#f5f5f5"/>
<path d="M973 580 l-3 3 l3 3 z" fill="#555"/>
<path d="M1005.5 580 l3 3 l-3 3 z" fill="#555"/>
<rect x="977" y="580.4" width="23.3" height="5.9" rx="2.9" fill="#6e6e6e"/>
<rect x="0" y="594" width="1024" height="11" fill="#f4f4f4" />
<line x1="0" y1="594.2" x2="1024" y2="594.2" stroke="#dadada" stroke-width="0.8"/>
<text x="8" y="603.7" font-size="7" fill="#6a6a6a" text-anchor="start" textLength="19" lengthAdjust="spacingAndGlyphs" >Ready</text>
<g fill="none" stroke="#555" stroke-width="0.8"><rect x="39.8" y="597.8" width="9" height="8"/><line x1="39.8" y1="599.6" x2="48.8" y2="599.6" stroke-width="1.6"/><circle cx="46" cy="603" r="1.3" fill="#555"/></g>
<g fill="none" stroke="#333" stroke-width="0.8"><circle cx="65.5" cy="598.5" r="1.5"/><path d="M61.5 601 h8 M65.5 600 v4 M63 605 l2.5 -1.5 l2.5 1.5"/></g>
<text x="73" y="603.8" font-size="7" fill="#262626" text-anchor="start" font-weight="bold" textLength="81" lengthAdjust="spacingAndGlyphs" >Accessibility: Investigate</text>
<rect x="827" y="594" width="25" height="11" fill="#dcdcdc" />
<g fill="none" stroke="#444" stroke-width="0.8"><rect x="835" y="598" width="8" height="7"/><path d="M837.7 598 v7 M840.3 598 v7 M835 600.5 h8"/><rect x="862" y="598" width="8" height="7"/><rect x="864" y="599.5" width="4" height="5.5"/><path d="M889 598 h8 v7 M889 598 v7 M892 598 v3 h3 v-3"/></g>
<path d="M911.5 602 h4" stroke="#555" stroke-width="0.8"/>
<path d="M919 602 h66" stroke="#b0b0b0" stroke-width="0.8"/>
<rect x="951.5" y="598" width="2.2" height="7" fill="#555" />
<path d="M988.5 602 h5 M991 599.5 v5" stroke="#555" stroke-width="0.8"/>
<text x="1003" y="605.3" font-size="7" fill="#555" text-anchor="start" textLength="16" lengthAdjust="spacingAndGlyphs" >100%</text>
</svg></body></html>
